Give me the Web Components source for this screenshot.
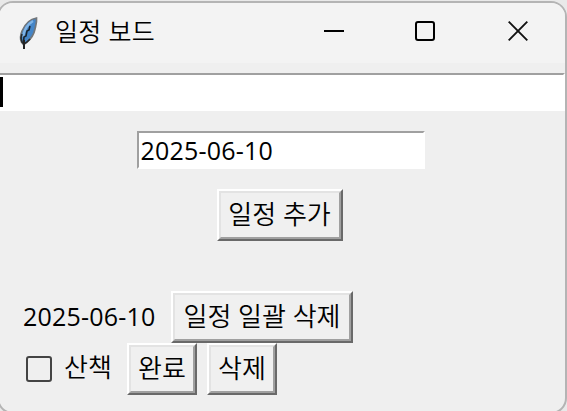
<!DOCTYPE html>
<html lang="ko"><head><meta charset="utf-8"><title>일정 보드</title>
<style>
html,body{margin:0;width:567px;height:411px;overflow:hidden;background:#e9e9e9}
body{font-family:"Open Sans","Noto Sans CJK KR",sans-serif;color:#000}
.add{margin-right:2px}
</style></head><body>
<board-window>
  <title-bar slot="title">일정 보드</title-bar>
  <text-entry class="wide" focused style="--w:565px"></text-entry>
  <text-entry style="--w:288px">2025-06-10</text-entry>
  <tk-button class="add" style="--w:126px">일정 추가</tk-button>
  <schedule-list slot="list">
    <schedule-row style="--gap:16px"><tk-label>2025-06-10</tk-label><tk-button style="--w:182px">일정 일괄 삭제</tk-button></schedule-row>
    <schedule-row style="--gap:10px"><check-item>산책</check-item><tk-button style="--w:70px">완료</tk-button><tk-button style="--w:70px">삭제</tk-button></schedule-row>
  </schedule-list>
</board-window>
<script>
const define=(name,html)=>customElements.define(name,class extends HTMLElement{
  constructor(){super();this.attachShadow({mode:'open'}).innerHTML=html;}
});
define('board-window',`<style>
:host{display:block;box-sizing:border-box;width:570px;height:413px;margin:1px 0 0 -3px;border:2px solid #b4b4b4;border-radius:16px;background:#efefef;overflow:hidden}
.fields{display:flex;flex-direction:column;align-items:center;gap:20px;padding:10px 2px 0 0;margin-left:-1px}
.list{padding-top:50px}
</style><slot name="title"></slot><div class="fields"><slot></slot></div><div class="list"><slot name="list"></slot></div>`);
define('title-bar',`<style>
:host{display:flex;align-items:center;height:60px;background:#f3f3f3;box-sizing:border-box;padding:0 37px 0 19px;font-size:25px}
.name{margin-left:15px;line-height:36px;margin-top:-5px;flex:1;letter-spacing:.3px;font-weight:350;white-space:nowrap}
.feather{margin-top:-1px}.controls{display:flex;gap:71px;margin-top:-4px}svg{display:block}.close{margin-left:2px}
</style>
<svg class="feather" width="22" height="34" viewBox="0 0 22 34"><path d="M18.5 2C12 3 7 8 4 15c-1.6 4-2 8-.5 11l2 2.5 3-2C13 23 16 18 17 13c1-4 2-7 1.5-11z" fill="#4485c7" stroke="#72767a" stroke-width="1.7"/><path d="M15 5C10 8 6 14 5 21" fill="none" stroke="#80b4e6" stroke-width="2.4"/><path d="M12 10l-1 4-2 1-1 5-2 1-.5 5" fill="none" stroke="#17232e" stroke-width="1.6"/><path d="M4 18l-1 4 1 4 2 2 3-2 3-3" fill="none" stroke="#252a2e" stroke-width="1.6"/><path d="M6 24v9" stroke="#222" stroke-width="2"/></svg>
<span class="name"><slot></slot></span>
<div class="controls">
<svg width="20" height="20"><path d="M0 10h20" stroke="#000" stroke-width="2"/></svg>
<svg width="20" height="20"><rect x="1" y="1" width="18" height="18" rx="2" fill="none" stroke="#000" stroke-width="2"/></svg>
<svg class="close" width="20" height="20"><path d="M.7.7l18.6 18.6M19.3.7L.7 19.3" stroke="#111" stroke-width="1.9"/></svg>
</div>`);
define('text-entry',`<style>
:host{display:block;box-sizing:border-box;width:var(--w);height:38px;background:#fff;border:2px solid;border-color:#a0a0a0 #fff #fff #a0a0a0;font-size:25px;line-height:34px;letter-spacing:.2px;padding-left:2px;white-space:nowrap}
:host(.wide){border-left:0;padding:2px 0 0;align-self:flex-start;margin-left:2px}
.caret{display:none;width:3px;height:30px;background:#000}
:host([focused]) .caret{display:block}
</style><i class="caret"></i><slot></slot>`);
define('tk-button',`<style>
:host{display:block;box-sizing:border-box;width:var(--w);height:52px;border:2px solid;border-color:#fff #696969 #696969 #fff;font-size:26px;font-weight:350}
.face{box-sizing:border-box;height:48px;border:2px solid;border-color:#e3e3e3 #a0a0a0 #a0a0a0 #e3e3e3;background:#f0f0f0;text-align:center;line-height:42px;white-space:nowrap}
</style><div class="face"><slot></slot></div>`);
define('schedule-list',`<style>:host{display:flex;flex-direction:column;padding-left:24px}</style><slot></slot>`);
define('schedule-row',`<style>:host{display:flex;align-items:center;gap:var(--gap);height:52px}</style><slot></slot>`);
define('tk-label',`<style>:host{display:block;width:132px;font-size:25px;line-height:50px;margin-top:-3px;letter-spacing:.2px;white-space:nowrap}</style><slot></slot>`);
define('check-item',`<style>
:host{display:flex;align-items:center;width:94px;font-size:26px;font-weight:350;line-height:46px;white-space:nowrap}
.box{box-sizing:border-box;width:26px;height:26px;border:2px solid #444;border-radius:3px;margin:0 12px 0 3px}
.t{margin-top:-4px}
</style><span class="box"></span><span class="t"><slot></slot></span>`);
</script></body></html>
